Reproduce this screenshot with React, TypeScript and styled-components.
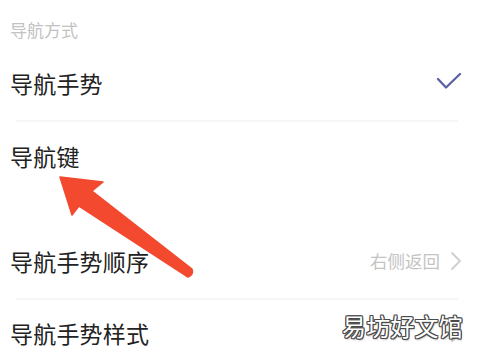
import React from 'react';
import styled, { createGlobalStyle } from 'styled-components';

const GlobalStyle = createGlobalStyle`
  html, body {
    margin: 0;
    padding: 0;
    background: #ffffff;
  }
  body {
    font-family: "Noto Sans CJK SC", "Noto Sans", sans-serif;
  }
`;

// Conteneur de la page
const Page = styled.div`
  position: relative;
  width: 488px;
  height: 358px;
  overflow: hidden;
  background: #ffffff;
`;

const SectionTitle = styled.div`
  height: 58px;
  display: flex;
  align-items: center;
  padding-left: 10px;
  font-size: 17px;
  color: #c2c2c2;
`;

const Row = styled.div<{ $top: number; $bottom: number }>`
  display: flex;
  align-items: center;
  justify-content: space-between;
  padding: ${(p) => p.$top}px 26px ${(p) => p.$bottom}px 10px;
  line-height: 30px;
`;

const Label = styled.span`
  font-size: 23px;
  color: #222222;
  letter-spacing: 0.2px;
`;

const Value = styled.span`
  display: flex;
  align-items: center;
  gap: 10px;
  font-size: 17.5px;
  color: #c4c4c4;
`;

const Divider = styled.div`
  height: 2px;
  margin: 0 30px 0 16px;
  background: #f6f6f6;
`;

const GroupGap = styled.div`
  height: 40px;
`;

const ArrowLayer = styled.svg`
  position: absolute;
  left: 0;
  top: 0;
  pointer-events: none;
`;

const Watermark = styled.div`
  position: absolute;
  left: 342px;
  top: 308px;
  font-size: 24px;
  color: #ffffff;
  letter-spacing: 0.2px;
  text-shadow:
    -1px -1px 0 #4a4a4a, 1px -1px 0 #4a4a4a, -1px 1px 0 #4a4a4a, 1px 1px 0 #4a4a4a,
    0 -1px 0 #4a4a4a, 0 1px 0 #4a4a4a, -1px 0 0 #4a4a4a, 1px 0 0 #4a4a4a,
    1px 2px 2px rgba(0, 0, 0, 0.25);
`;

function Check() {
  return (
    <svg width="26" height="20" viewBox="0 0 26 20">
      <path d="M2 6 L10 14.5 L24 1" fill="none" stroke="#5a62a6" strokeWidth="2.3" strokeLinecap="round" strokeLinejoin="round" />
    </svg>
  );
}

function Chevron() {
  return (
    <svg width="12" height="20" viewBox="0 0 12 20">
      <path d="M2 2 L10 10 L2 18" fill="none" stroke="#cfcfcf" strokeWidth="1.8" strokeLinecap="round" strokeLinejoin="round" />
    </svg>
  );
}

function App() {
  return (
    <Page>
      <GlobalStyle />
      <SectionTitle>导航方式</SectionTitle>
      <Row $top={10} $bottom={22}>
        <Label>导航手势</Label>
        <Check />
      </Row>
      <Divider />
      <Row $top={19} $bottom={22}>
        <Label>导航键</Label>
      </Row>
      <GroupGap />
      <Row $top={13} $bottom={22}>
        <Label>导航手势顺序</Label>
        <Value>
          右侧返回
          <Chevron />
        </Value>
      </Row>
      <Divider />
      <Row $top={18} $bottom={10}>
        <Label>导航手势样式</Label>
        <Chevron />
      </Row>

      <ArrowLayer width="488" height="358" viewBox="0 0 488 358">
        <path
          d="M60 177 L103 182 L92 191 L192 269 Q194 275 188 277 L79 206 L72 215 Z"
          fill="#f2492f"
          stroke="#f2492f"
          strokeWidth="1.5"
          strokeLinejoin="round"
        />
      </ArrowLayer>
      <Watermark>易坊好文馆</Watermark>
    </Page>
  );
}

export default App;
